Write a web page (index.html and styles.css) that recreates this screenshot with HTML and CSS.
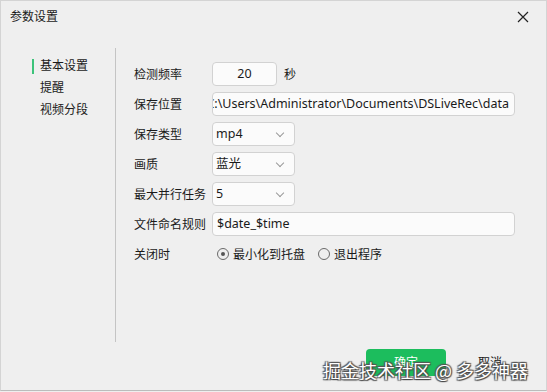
FILE: index.html
```html
<!DOCTYPE html>
<html lang="zh-CN">
<head>
    <meta charset="UTF-8">
    <title>参数设置</title>
    <link rel="stylesheet" href="styles.css">
</head>
<body>
    <div class="window">
        <div class="title-bar">
            <div class="title">参数设置</div>
            <div class="close-btn">
                <svg width="12" height="12" viewBox="0 0 12 12"><path d="M1 1L11 11M11 1L1 11" stroke="#222" stroke-width="1.2"/></svg>
            </div>
        </div>
        <div class="main">
            <div class="side-nav">
                <div class="nav-item active">基本设置</div>
                <div class="nav-item">提醒</div>
                <div class="nav-item">视频分段</div>
            </div>
            <div class="form">
                <div class="form-row">
                    <div class="label">检测频率</div>
                    <div class="field small center">20</div>
                    <div class="unit">秒</div>
                </div>
                <div class="form-row">
                    <div class="label">保存位置</div>
                    <div class="field wide path"><span>C:\Users\Administrator\Documents\DSLiveRec\data</span></div>
                </div>
                <div class="form-row">
                    <div class="label">保存类型</div>
                    <div class="field select">mp4<span class="chevron"></span></div>
                </div>
                <div class="form-row">
                    <div class="label">画质</div>
                    <div class="field select">蓝光<span class="chevron"></span></div>
                </div>
                <div class="form-row">
                    <div class="label">最大并行任务</div>
                    <div class="field select">5<span class="chevron"></span></div>
                </div>
                <div class="form-row">
                    <div class="label">文件命名规则</div>
                    <div class="field wide">$date_$time</div>
                </div>
                <div class="form-row">
                    <div class="label">关闭时</div>
                    <div class="radio-group">
                        <label class="radio checked"><span class="dot"></span>最小化到托盘</label>
                        <label class="radio"><span class="dot"></span>退出程序</label>
                    </div>
                </div>
            </div>
        </div>
        <div class="footer">
            <div class="btn primary">确定</div>
            <div class="btn">取消</div>
        </div>
        <div class="watermark">掘金技术社区 @ 多多神器</div>
    </div>
</body>
</html>
```

FILE: styles.css
```css
* {
    box-sizing: border-box;
}
body {
    margin: 0;
    font-family: "Noto Sans", "Noto Sans CJK SC", sans-serif;
    font-size: 12px;
    color: #1a1a1a;
    background: #efefef;
}
.window {
    position: relative;
    width: 547px;
    height: 391px;
    background: #efefef;
    border: 1px solid #d4d4d4;
    border-bottom-color: #bcbcbc;
    display: flex;
    flex-direction: column;
    overflow: hidden;
}
.title-bar {
    height: 47px;
    display: flex;
    justify-content: space-between;
    padding: 6px 17px 0 9px;
}
.title {
    line-height: 20px;
}
.close-btn {
    padding-top: 3px;
}
.main {
    display: flex;
    height: 294px;
}
.side-nav {
    width: 115px;
    border-right: 1px solid #c4c4c4;
    padding-top: 7px;
}
.nav-item {
    position: relative;
    height: 22px;
    line-height: 22px;
    padding-left: 39px;
}
.nav-item.active::before {
    content: "";
    position: absolute;
    left: 31px;
    top: 4px;
    width: 2px;
    height: 15px;
    background: #3cc37a;
}
.form {
    flex: 1;
    padding: 14px 0 0 18px;
    display: flex;
    flex-direction: column;
    gap: 6px;
}
.form-row {
    display: flex;
    align-items: center;
    height: 24px;
}
.label {
    width: 78px;
}
.field {
    height: 24px;
    line-height: 22px;
    font-size: 12.5px;
    background: #fbfbfb;
    border: 1px solid #d2d2d2;
    border-radius: 4px;
    padding: 0 4px;
    white-space: nowrap;
    overflow: hidden;
}
.field.small {
    width: 65px;
}
.field.center {
    text-align: center;
}
.field.wide {
    width: 303px;
}
.field.path {
    display: flex;
    justify-content: flex-end;
    padding-right: 5px;
}
.field.select {
    position: relative;
    width: 83px;
    padding-left: 3px;
}
.chevron {
    position: absolute;
    right: 11px;
    top: 7px;
    width: 6px;
    height: 6px;
    border-right: 1px solid #9a9a9a;
    border-bottom: 1px solid #9a9a9a;
    transform: rotate(45deg);
}
.unit {
    margin-left: 7px;
}
.radio-group {
    display: flex;
    gap: 13px;
    padding-left: 5px;
}
.radio {
    display: flex;
    align-items: center;
}
.radio .dot {
    width: 12px;
    height: 12px;
    border: 1.5px solid #6a6a6a;
    border-radius: 50%;
    margin-right: 4px;
    display: flex;
    align-items: center;
    justify-content: center;
}
.radio.checked .dot::after {
    content: "";
    width: 4px;
    height: 4px;
    border-radius: 50%;
    background: #555;
}
.footer {
    display: flex;
    padding: 7px 0 0 365px;
    gap: 4px;
}
.btn {
    width: 80px;
    height: 27px;
    line-height: 27px;
    text-align: center;
    border-radius: 4px;
}
.btn.primary {
    background: #1cbd5d;
    color: #fff;
}
.watermark {
    position: absolute;
    left: 322px;
    top: 356px;
    font-family: "Noto Sans CJK SC", sans-serif;
    font-size: 18px;
    color: #fff;
    text-shadow: 1px 1px 1px #444, -1px -1px 1px #555, 1px -1px 1px #555, -1px 1px 1px #555;
}
```
